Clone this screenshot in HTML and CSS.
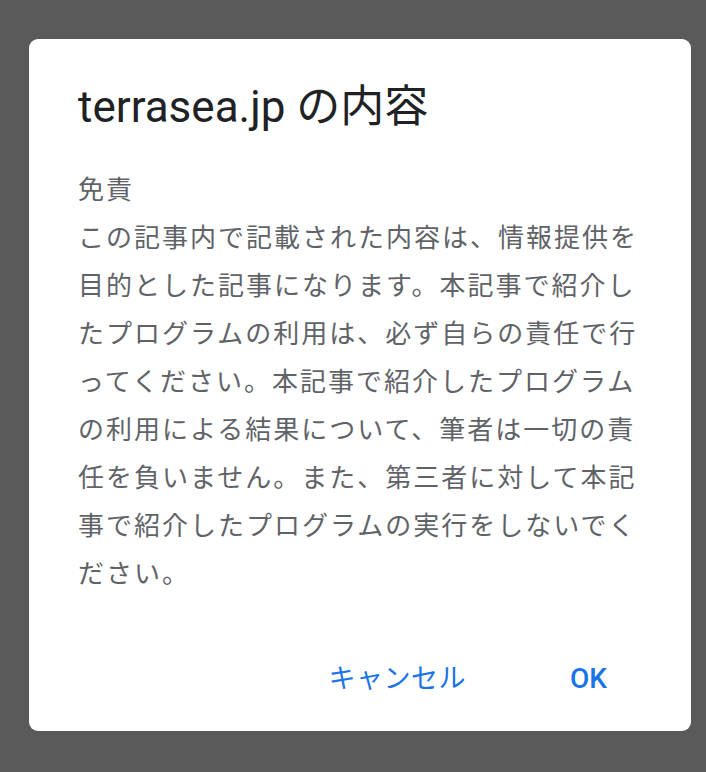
FILE: index.html
```html
<!DOCTYPE html>
<html lang="ja">
<head>
<meta charset="utf-8">
<title>terrasea.jp の内容</title>
<link rel="stylesheet" href="styles.css">
</head>
<body>
<div class="dialog">
  <h1 class="title">terrasea.jp の内容</h1>
  <p class="message">免責<br>この記事内で記載された内容は、情報提供を目的とした記事になります。本記事で紹介したプログラムの利用は、必ず自らの責任で行ってください。本記事で紹介したプログラムの利用による結果について、筆者は一切の責任を負いません。また、第三者に対して本記事で紹介したプログラムの実行をしないでください。</p>
  <div class="actions">
    <button class="btn btn-cancel">キャンセル</button>
    <button class="btn btn-ok">OK</button>
  </div>
</div>
</body>
</html>
```
FILE: styles.css
```css
html, body {
  margin: 0;
  padding: 0;
  background: #5a5a5a;
  height: 100%;
}
body {
  padding-top: 39px;
  padding-left: 29px;
  box-sizing: border-box;
  font-family: Roboto, "Noto Sans CJK JP", sans-serif;
}
.dialog {
  width: 662px;
  height: 692px;
  box-sizing: border-box;
  background: #ffffff;
  border-radius: 9px;
  padding: 40px 49px 0 49px;
  display: flex;
  flex-direction: column;
}
.title {
  margin: 0;
  font-size: 44px;
  font-weight: 400;
  line-height: 56px;
  color: #202124;
}
.message {
  margin: 31px 0 0 0;
  font-size: 26px;
  letter-spacing: 2px;
  line-height: 48px;
  color: #5f6368;
  line-break: loose;
}
.actions {
  margin-top: 57px;
  display: flex;
  justify-content: flex-end;
  gap: 104px;
  padding-right: 35px;
}
.btn {
  border: none;
  background: none;
  padding: 0;
  font-family: Roboto, "Noto Sans CJK JP", sans-serif;
  font-size: 27px;
  line-height: 48px;
  color: #1a73e8;
}
.btn-cancel {
  font-weight: 400;
  letter-spacing: 0.5px;
}
.btn-ok {
  font-weight: 500;
  font-size: 28px;
}
```
